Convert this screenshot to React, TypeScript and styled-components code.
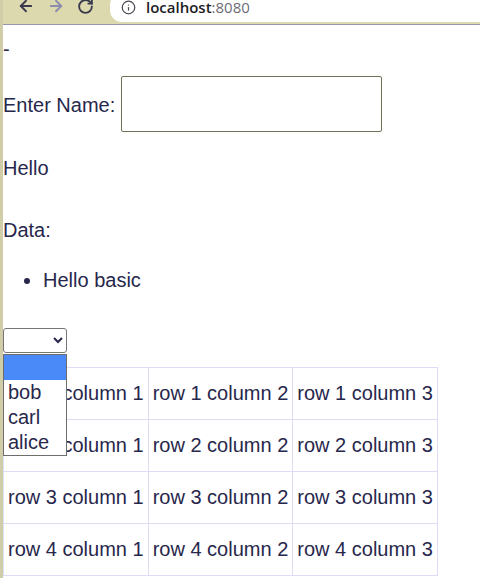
import React from "react";
import styled, { createGlobalStyle } from "styled-components";
import { ArrowLeft, ArrowRight, RotateCw, Info } from "lucide-react";

const GlobalStyle = createGlobalStyle`
  html, body {
    margin: 0;
    padding: 0;
    background: #ffffff;
  }
  body {
    font-family: "Liberation Sans", Arial, sans-serif;
    font-size: 20px;
    color: #27274c;
  }
`;

const Frame = styled.div`
  min-height: 578px;
  border-left: 3px solid #cfcea8;
  overflow: hidden;
`;

const BrowserBar = styled.div`
  height: 24px;
  background: #dbd9ad;
  border-bottom: 1px solid #9696b0;
  display: flex;
  align-items: center;
  overflow: hidden;
`;

const NavRow = styled.div`
  display: flex;
  align-items: center;
  gap: 12px;
  margin-top: -12px;
  padding-left: 14px;
`;

const NavButton = styled.span<{ $dim?: boolean }>`
  display: flex;
  color: ${(p) => (p.$dim ? "#8c8cae" : "#3a3a4e")};
`;

const AddressPill = styled.div`
  flex: 1;
  margin-left: 16px;
  margin-top: -10px;
  height: 29px;
  background: #ffffff;
  border-radius: 12px 0 0 12px;
  display: flex;
  align-items: center;
  padding-left: 11px;
  gap: 10px;
  font-family: "Open Sans", "Liberation Sans", sans-serif;
  font-size: 15px;
  color: #5f6368;
`;

const Host = styled.span`
  color: #1d1d24;
  font-weight: 600;
`;

const Port = styled.span`
  color: #6c6c78;
`;

const Content = styled.div`
  display: flex;
  flex-direction: column;
  align-items: flex-start;
`;

const Line = styled.div<{ $top: number }>`
  margin-top: ${(p) => p.$top}px;
  line-height: 23px;
`;

const NameRow = styled.div`
  margin-top: 15px;
  display: flex;
  align-items: center;
  gap: 6px;
  line-height: 23px;
`;

const Label = styled.label`
  padding-top: 2px;
`;

const NameInput = styled.input`
  box-sizing: border-box;
  width: 261px;
  height: 56px;
  border: 1px solid #707056;
  border-radius: 2px;
  font-size: 20px;
  font-family: inherit;
  padding: 0 6px;
`;

const List = styled.ul`
  margin: 27px 0 0;
  padding-left: 40px;
  line-height: 23px;
`;

const SelectWrap = styled.div`
  position: relative;
  margin-top: 36px;
  z-index: 2;
`;

const NameSelect = styled.select`
  box-sizing: border-box;
  width: 64px;
  height: 25px;
  border: 1px solid #767676;
  border-radius: 3px;
  background: #ffffff;
  font-size: 16px;
  font-family: inherit;
  color: #27274c;
`;

const Menu = styled.div`
  position: absolute;
  top: 26px;
  left: 0;
  width: 64px;
  box-sizing: border-box;
  border: 1px solid #6e6e6e;
  background: #ffffff;
`;

const MenuItem = styled.div<{ $active?: boolean }>`
  height: 25px;
  line-height: 25px;
  padding-left: 4px;
  background: ${(p) => (p.$active ? "#4a89f8" : "transparent")};
`;

const Grid = styled.table`
  margin-top: 14px;
  border-collapse: collapse;
  border: 1px solid #dddbf6;
`;

const Cell = styled.td`
  border: 1px solid #dddbf6;
  padding: 14px 4px;
  line-height: 23px;
  white-space: nowrap;
`;

const names = ["", "bob", "carl", "alice"];
const rows = [1, 2, 3, 4];
const cols = [1, 2, 3];

export default function App() {
  return (
    <Frame>
      <GlobalStyle />
      <BrowserBar>
        <NavRow>
          <NavButton>
            <ArrowLeft size={18} strokeWidth={2.4} />
          </NavButton>
          <NavButton $dim>
            <ArrowRight size={18} strokeWidth={2.4} />
          </NavButton>
          <NavButton>
            <RotateCw size={17} strokeWidth={2.6} />
          </NavButton>
        </NavRow>
        <AddressPill>
          <Info size={15} strokeWidth={2} color="#4a4a55" />
          <span>
            <Host>localhost</Host>
            <Port>:8080</Port>
          </span>
        </AddressPill>
      </BrowserBar>
      <Content>
        <Line $top={13}>-</Line>
        <NameRow>
          <Label>Enter Name:</Label>
          <NameInput />
        </NameRow>
        <Line $top={25}>Hello</Line>
        <Line $top={39}>Data:</Line>
        <List>
          <li>Hello basic</li>
        </List>
        <SelectWrap>
          <NameSelect>
            {names.map((n, i) => (
              <option key={i}>{n}</option>
            ))}
          </NameSelect>
          <Menu>
            {names.map((n, i) => (
              <MenuItem key={i} $active={i === 0}>
                {n}
              </MenuItem>
            ))}
          </Menu>
        </SelectWrap>
        <Grid>
          <tbody>
            {rows.map((r) => (
              <tr key={r}>
                {cols.map((c) => (
                  <Cell key={c}>
                    row {r} column {c}
                  </Cell>
                ))}
              </tr>
            ))}
          </tbody>
        </Grid>
      </Content>
    </Frame>
  );
}
